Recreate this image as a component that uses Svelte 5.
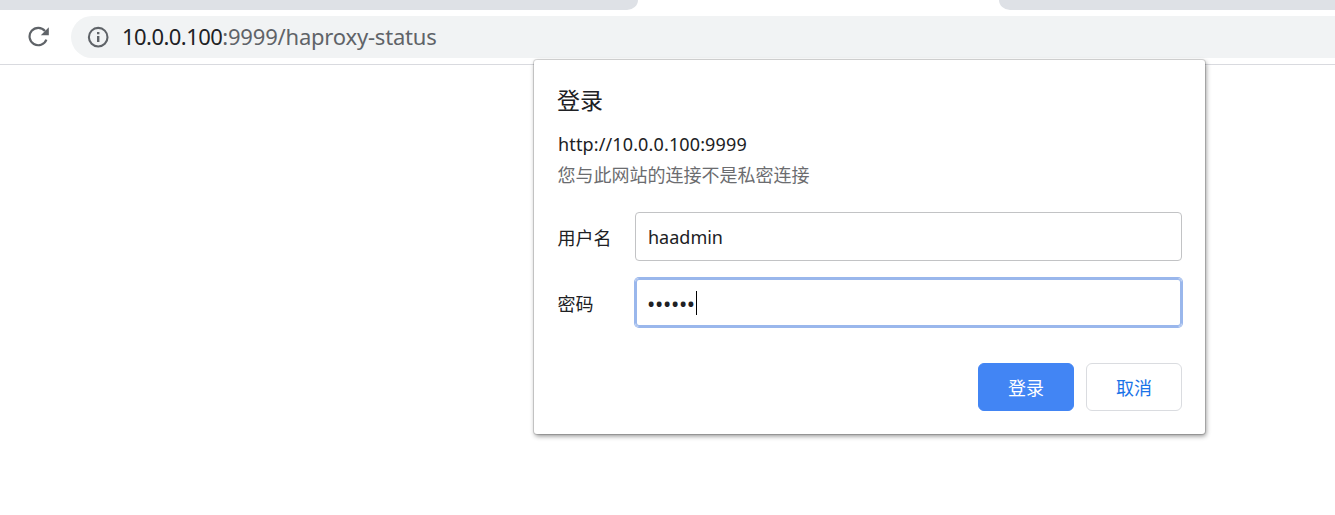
<script>
  const user = 'haadmin';
  const bullets = '••••••';
</script>

<div class="browser">
  <div class="tabstrip"><div class="tab left"></div><div class="tab right"></div></div>
  <div class="toolbar">
    <svg class="reload" viewBox="0 0 22 22" width="22" height="22" aria-hidden="true">
      <path fill="none" stroke="#5f6368" stroke-width="2.2" d="M17 5A8.7 8.7 0 1 0 18.4 13.6" />
      <path fill="#5f6368" d="M20.8 1.2V9.2H12.8z" />
    </svg>
    <div class="omnibox">
      <svg class="info" viewBox="0 0 22 22" width="22" height="22" aria-hidden="true">
        <circle cx="11.2" cy="11.2" r="9.3" fill="none" stroke="#5f6368" stroke-width="2.1" />
        <path fill="#5f6368" d="M10 6h2.4v2.2H10zM10 10h2.4v6H10z" />
      </svg>
      <div class="url"><span class="host">10.0.0.100</span><span class="path">:9999/haproxy-status</span></div>
    </div>
  </div>

  <div class="dialog">
    <h1>登录</h1>
    <div class="origin">http://10.0.0.100:9999</div>
    <div class="warning">您与此网站的连接不是私密连接</div>
    <div class="row first">
      <div class="label">用户名</div>
      <div class="field"><span class="value">{user}</span></div>
    </div>
    <div class="row second">
      <div class="label">密码</div>
      <div class="field focused"><span class="dots">{bullets}</span><span class="caret"></span></div>
    </div>
    <div class="actions">
      <button class="primary">登录</button>
      <button>取消</button>
    </div>
  </div>
</div>

<style>
  :global(body) { background: #fff; overflow: hidden; }
  .browser {
    position: relative;
    height: 515px;
    overflow: hidden;
    font-family: "Noto Sans", "Noto Sans CJK SC", sans-serif;
    color: #202124;
  }
  .tabstrip { display: flex; justify-content: space-between; height: 10px; }
  .tab { background: #dee1e6; height: 10px; }
  .left { width: 638px; border-bottom-right-radius: 11px 10px; }
  .right { width: 336px; border-bottom-left-radius: 11px 10px; }
  .toolbar {
    box-sizing: border-box;
    height: 55px;
    padding: 6px 0 6px 28px;
    border-bottom: 1px solid #d9dadf;
    display: flex;
  }
  .reload { margin-top: 10px; flex: none; }
  .omnibox {
    margin-left: 21px;
    flex: 1;
    height: 42px;
    border-radius: 21px 0 0 21px;
    background: #f1f3f4;
    display: flex;
    align-items: center;
    padding-left: 16px;
  }
  .info { flex: none; }
  .url { margin-left: 13px; font-size: 22px; line-height: 41px; height: 42px; white-space: nowrap; }
  .host { letter-spacing: -0.55px; }
  .path { letter-spacing: -0.2px; color: #5f6368; }
  .dialog {
    position: absolute;
    left: 534px;
    top: 60px;
    width: 671px;
    height: 374px;
    box-sizing: border-box;
    padding: 24px 23px 0;
    background: #fff;
    border-radius: 3px;
    box-shadow: 0 0 0 1px rgba(0, 0, 0, 0.13), 1px 2px 5px rgba(0, 0, 0, 0.45);
  }
  h1 { margin: 0; font-family: "Noto Sans CJK SC", sans-serif; font-weight: 400; font-size: 23px; line-height: 30px; }
  .origin { margin-top: 16px; font-size: 18px; line-height: 28px; letter-spacing: 0.13px; padding-left: 1px; }
  .warning { margin-top: 2px; padding-left: 0.5px; font-family: "Noto Sans CJK SC", sans-serif; font-size: 18px; line-height: 28px; color: #6b6c6f; }
  .row { display: flex; align-items: center; height: 49px; }
  .first { margin-top: 24px; }
  .second { margin-top: 17px; }
  .label { box-sizing: border-box; width: 78px; padding-left: 0.5px; font-family: "Noto Sans CJK SC", sans-serif; font-size: 18px; line-height: 26px; }
  .field {
    flex: 1;
    height: 49px;
    box-sizing: border-box;
    border: 1px solid #c2c3c5;
    border-radius: 4px;
    display: flex;
    align-items: center;
    padding-left: 12px;
  }
  .focused { border-color: #9ab7ec; box-shadow: 0 0 0 1px #9ab7ec, inset 0 0 0 1px #9ab7ec; }
  .value { font-size: 18px; }
  .dots { width: 49px; margin-left: -1px; font-size: 22px; line-height: 24px; letter-spacing: -0.3px; white-space: nowrap; }
  .caret { width: 1px; height: 24px; background: #000; }
  .actions { margin-top: 36px; display: flex; justify-content: flex-end; gap: 12px; }
  button {
    box-sizing: border-box;
    width: 96px;
    height: 48px;
    padding: 0;
    border: 1px solid #dadce0;
    border-radius: 6px;
    background: #fff;
    color: #1a73e8;
    font: 18px/26px "Noto Sans CJK SC", sans-serif;
  }
  .primary { background: #4285f4; border-color: #4285f4; color: #fff; }
</style>
